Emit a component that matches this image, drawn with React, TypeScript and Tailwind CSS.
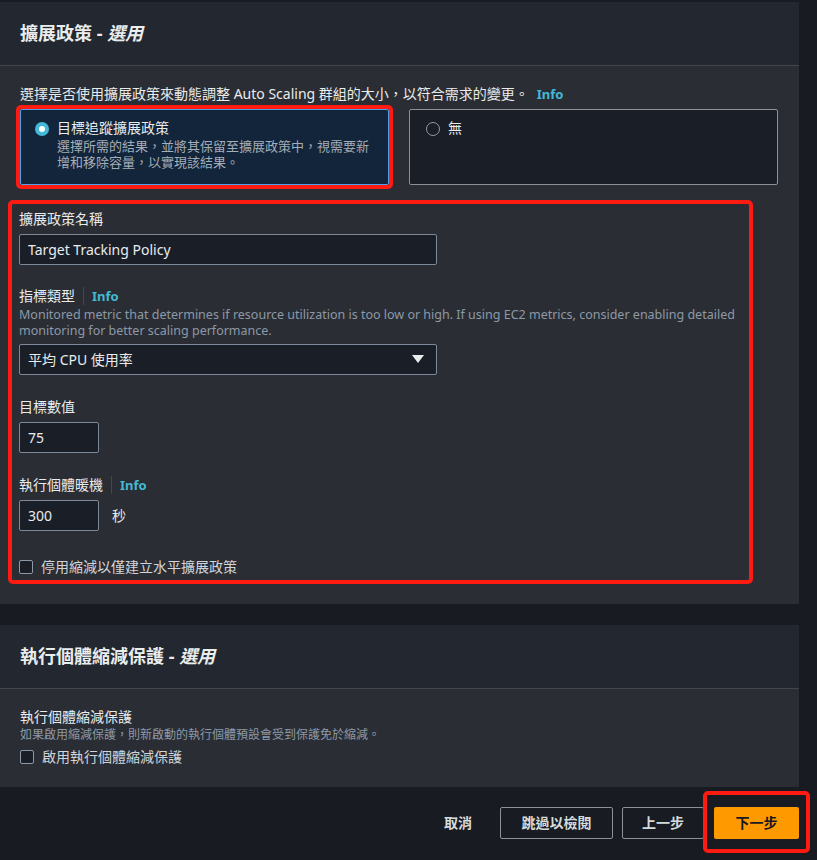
import { useState } from 'react';

const FONT = "font-['Noto_Sans','Noto_Sans_CJK_TC',sans-serif]";

function Info() {
  return (
    <span className="border-l border-[#414750] pl-2 text-[13px] font-bold text-[#44b9d6]">
      Info
    </span>
  );
}

function PanelHeader({ title }: { title: string }) {
  return (
    <div className="flex h-[64px] items-center border-b border-[#414750] bg-[#232730] px-5">
      <h2 className="text-[18px] font-bold text-[#eaeded]">
        {title} - <i>選用</i>
      </h2>
    </div>
  );
}

function Checkbox({ label }: { label: string }) {
  return (
    <label className="flex items-center gap-2 text-sm text-[#d1d5db]">
      <span className="h-[14px] w-[14px] rounded-[2px] border border-[#8d99a8] bg-[#1a1f27]" />
      {label}
    </label>
  );
}

const inputClasses =
  'h-[31px] rounded-[2px] border border-[#7d8998] bg-[#1a1f27] px-2 text-sm text-[#e9ebed] outline-none';

export default function App() {
  const [policy, setPolicy] = useState<'target' | 'none'>('target');

  return (
    <div className={`h-[860px] w-[817px] overflow-hidden bg-[#181b22] ${FONT}`}>
      <div className="w-[799px] pt-[2px]">
        {/* scaling policy panel */}
        <section className="bg-[#2a2d33]">
          <PanelHeader title="擴展政策" />
          <div className="px-5 pb-[20px] pt-[18px]">
            <p className="flex items-center gap-2 text-sm text-[#e9ebed]">
              選擇是否使用擴展政策來動態調整 Auto Scaling 群組的大小，以符合需求的變更。
              <span className="text-[13px] font-bold text-[#44b9d6]">Info</span>
            </p>
            <div className="mt-[5px] grid grid-cols-[369px_369px] gap-5">
              <button
                type="button"
                onClick={() => setPolicy('target')}
                className="relative flex h-[76px] gap-2 rounded-[2px] border border-[#539fe5] bg-[#12253a] px-[14px] pt-[8px] text-left"
              >
                <span className="mt-[4px] flex h-[14px] w-[14px] shrink-0 items-center justify-center rounded-full bg-[#44b9d6]">
                  {policy === 'target' && <span className="h-[6px] w-[6px] rounded-full bg-white" />}
                </span>
                <span>
                  <span className="block text-sm text-[#e9ebed]">目標追蹤擴展政策</span>
                  <span className="block text-[13px] leading-[16px] text-[#a4adb8]">
                    選擇所需的結果，並將其保留至擴展政策中，視需要新增和移除容量，以實現該結果。
                  </span>
                </span>
                {/* annotation highlight */}
                <span className="pointer-events-none absolute -inset-[5px] rounded-[5px] border-[4px] border-[#ff1a12]" />
              </button>
              <button
                type="button"
                onClick={() => setPolicy('none')}
                className="flex h-[76px] gap-2 rounded-[2px] border border-[#8d9099] bg-[#1a1f27] px-[16px] pt-[8px] text-left"
              >
                <span className="mt-[4px] h-[14px] w-[14px] shrink-0 rounded-full border-[1.5px] border-[#8d99a8]" />
                <span className="text-sm text-[#e9ebed]">無</span>
              </button>
            </div>

            <div className="relative -ml-[12px] mt-[15px] w-[745px] pb-[7px] pl-[11px] pt-[9px]">
              <span className="pointer-events-none absolute inset-0 rounded-[5px] border-[4px] border-[#ff1a12]" />
              <div className="flex flex-col">
                <label className="text-sm text-[#e9ebed]">擴展政策名稱</label>
                <input
                  className={`mt-[5px] w-[418px] ${inputClasses}`}
                  defaultValue="Target Tracking Policy"
                />

                <div className="mt-[21px] flex items-center gap-2 text-sm text-[#e9ebed]">
                  指標類型 <Info />
                </div>
                <p className="mt-[1px] pr-[12px] text-[12.5px] leading-[16px] text-[#8d99a8]">
                  Monitored metric that determines if resource utilization is too low or high. If using EC2 metrics, consider enabling detailed monitoring for better scaling performance.
                </p>
                <div className={`mt-[5px] flex w-[418px] items-center justify-between ${inputClasses}`}>
                  <span>平均 CPU 使用率</span>
                  <svg width="12" height="9" viewBox="0 0 12 9" className="mr-[4px]">
                    <path d="M0 0h12L6 8z" fill="#e9ebed" />
                  </svg>
                </div>

                <label className="mt-[22px] text-sm text-[#e9ebed]">目標數值</label>
                <input className={`mt-[5px] w-[80px] ${inputClasses}`} defaultValue="75" />

                <div className="mt-[22px] flex items-center gap-2 text-sm text-[#e9ebed]">
                  執行個體暖機 <Info />
                </div>
                <div className="mt-[5px] flex items-center gap-[13px]">
                  <input className={`w-[80px] ${inputClasses}`} defaultValue="300" />
                  <span className="text-sm text-[#e9ebed]">秒</span>
                </div>

                <div className="mt-[26px]">
                  <Checkbox label="停用縮減以僅建立水平擴展政策" />
                </div>
              </div>
            </div>
          </div>
        </section>

        {/* scale-in protection panel */}
        <section className="mt-[21px] bg-[#2a2d33]">
          <PanelHeader title="執行個體縮減保護" />
          <div className="px-5 pb-[20px] pt-[18px]">
            <p className="text-sm leading-[20px] text-[#e9ebed]">執行個體縮減保護</p>
            <p className="text-[12px] leading-[16px] text-[#8d99a8]">
              如果啟用縮減保護，則新啟動的執行個體預設會受到保護免於縮減。
            </p>
            <div className="mt-[4px]">
              <Checkbox label="啟用執行個體縮減保護" />
            </div>
          </div>
        </section>

        <div className="mt-[20px] flex items-center justify-end">
          <button type="button" className="mr-[28px] text-sm font-bold text-[#d5dbdb]">
            取消
          </button>
          <button
            type="button"
            className="h-[32px] w-[113px] rounded-[2px] border border-[#8d9099] text-sm font-bold text-[#d5dbdb]"
          >
            跳過以檢閱
          </button>
          <button
            type="button"
            className="ml-[9px] h-[32px] w-[82px] rounded-[2px] border border-[#8d9099] text-sm font-bold text-[#d5dbdb]"
          >
            上一步
          </button>
          <button
            type="button"
            className="relative ml-[10px] h-[32px] w-[85px] rounded-[2px] bg-[#ff9900] text-sm font-bold text-[#16191f]"
          >
            下一步
            <span className="pointer-events-none absolute -bottom-[14px] -left-[11px] -right-[11px] -top-[16px] rounded-[5px] border-[4px] border-[#ff1a12]" />
          </button>
        </div>
      </div>
    </div>
  );
}
